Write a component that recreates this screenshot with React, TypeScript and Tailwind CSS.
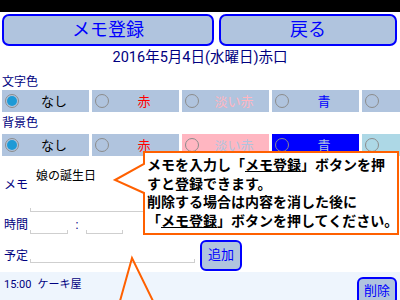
import React from "react";

const NAVY = "text-[#000080]";

function Radio({ checked }: { checked?: boolean }) {
  return (
    <span className="w-[14px] h-[14px] rounded-full border border-[#8c8c8c] flex items-center justify-center shrink-0">
      {checked && <span className="w-[10px] h-[10px] rounded-full bg-[#1e9ad6]" />}
    </span>
  );
}

type Cell = { label: string; bg: string; fg: string; checked?: boolean };

function ColorRow({ cells }: { cells: Cell[] }) {
  return (
    <div className="flex h-[22px] pl-[2px] gap-[3px]">
      {cells.map((c, i) => (
        <div key={i} className={`w-[87px] h-full shrink-0 flex items-center pl-[3px] ${c.bg}`}>
          <Radio checked={c.checked} />
          <span className={`flex-1 text-center text-[13px] leading-none ${c.fg}`}>{c.label}</span>
        </div>
      ))}
    </div>
  );
}

function Field({ className }: { className: string }) {
  return <div className={`h-[4px] border-b border-l border-r border-[#cfcfcf] ${className}`} />;
}

export default function App() {
  return (
    <div className="relative w-[400px] h-[300px] overflow-hidden bg-white font-[Roboto,'Noto_Sans_CJK_JP',sans-serif]">
      <div className="h-[12px] bg-black" />

      <div className="flex pl-[2px] pt-[2px] gap-[5px]">
        <button className="w-[212px] h-[32px] rounded-[7px] border-2 border-[#0000ff] bg-[#b0c4de] text-[#0000ff] text-[18px] leading-none">
          メモ登録
        </button>
        <button className="w-[178px] h-[32px] rounded-[7px] border-2 border-[#0000ff] bg-[#b0c4de] text-[#0000ff] text-[18px] leading-none">
          戻る
        </button>
      </div>

      <div className={`h-[24px] text-center text-[14.5px] leading-[24px] ${NAVY}`}>2016年5月4日(水曜日)赤口</div>

      <div className={`h-[20px] pt-[4px] pl-[2px] text-[12px] leading-[16px] ${NAVY}`}>文字色</div>
      <ColorRow
        cells={[
          { label: "なし", bg: "bg-[#b0c4de]", fg: "text-black", checked: true },
          { label: "赤", bg: "bg-[#b0c4de]", fg: "text-[#ff0000]" },
          { label: "淡い赤", bg: "bg-[#b0c4de]", fg: "text-[#ffb6c1]" },
          { label: "青", bg: "bg-[#b0c4de]", fg: "text-[#0000ff]" },
          { label: "", bg: "bg-[#b0c4de]", fg: "text-[#add8e6]" },
        ]}
      />

      <div className={`h-[22px] pl-[2px] text-[12px] leading-[22px] ${NAVY}`}>背景色</div>
      <ColorRow
        cells={[
          { label: "なし", bg: "bg-[#b0c4de]", fg: "text-black", checked: true },
          { label: "赤", bg: "bg-[#b0c4de]", fg: "text-[#ff0000]" },
          { label: "淡い赤", bg: "bg-[#ffb6c1]", fg: "text-[#b0c4de]" },
          { label: "青", bg: "bg-[#0000ff]", fg: "text-[#b0c4de]" },
          { label: "", bg: "bg-[#add8e6]", fg: "text-[#b0c4de]" },
        ]}
      />

      <div className="flex h-[56px] items-center">
        <div className={`w-[30px] pl-[4px] pt-[2px] text-[12px] ${NAVY}`}>メモ</div>
        <div className="flex flex-col w-[362px] h-full pt-[13px]">
          <div className="h-[39px] pl-[6px] text-[12px] leading-[14px] text-black">娘の誕生日</div>
          <Field className="w-full" />
        </div>
      </div>

      <div className="flex h-[26px] items-center">
        <div className={`w-[30px] pl-[4px] text-[12px] ${NAVY}`}>時間</div>
        <Field className="w-[38px] mt-[14px]" />
        <span className={`w-[18px] text-center text-[12px] ${NAVY}`}>:</span>
        <Field className="w-[37px] mt-[14px]" />
      </div>

      <div className="flex h-[34px] items-center">
        <div className={`w-[30px] pl-[4px] pt-[2px] text-[12px] ${NAVY}`}>予定</div>
        <Field className="w-[165px] mt-[12px]" />
        <button className="ml-[5px] w-[42px] h-[31px] rounded-[6px] border-2 border-[#0000ff] bg-[#b0c4de] text-[#0000ff] text-[13px]">
          追加
        </button>
      </div>

      <div className="flex h-[28px] items-start bg-[#eef5fd]">
        <div className={`flex-1 pl-[4px] pt-[6px] text-[11px] leading-[14px] ${NAVY}`}>
          15:00<span className="ml-[6px]">ケーキ屋</span>
        </div>
        <button className="mt-[5px] mr-[3px] w-[40px] h-[28px] rounded-[6px] border-2 border-[#0000ff] bg-[#b0c4de] text-[#0000ff] text-[13px]">
          削除
        </button>
      </div>

      <svg className="absolute left-0 top-0 pointer-events-none" width="400" height="300">
        <path
          d="M144 152 L398 152 L398 234 L144 234 L144 193 L115 180 L144 164 Z"
          fill="white"
          stroke="#ff6000"
          strokeWidth="2"
        />
        <path d="M120 301 L132 258 L153 301" fill="none" stroke="#ff6000" strokeWidth="2" />
      </svg>
      <div className="absolute left-[147px] top-[156px] w-[250px] text-[14px] leading-[18.5px] font-bold text-black whitespace-nowrap">
        <div>
          メモを入力し「<span className="underline">メモ登録</span>」ボタンを押
        </div>
        <div>すと登録できます。</div>
        <div>削除する場合は内容を消した後に</div>
        <div>
          「<span className="underline">メモ登録</span>」ボタンを押してください。
        </div>
      </div>
    </div>
  );
}
